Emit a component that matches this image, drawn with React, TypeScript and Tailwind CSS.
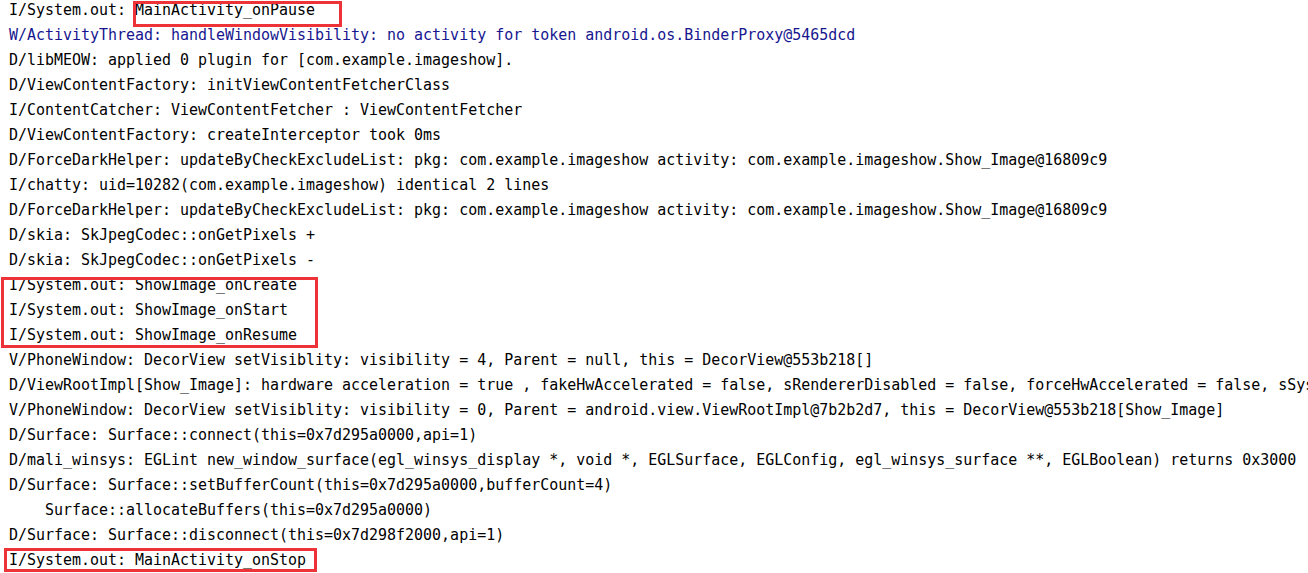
const lines: { text: string; blue?: boolean }[] = [
  { text: "I/System.out: MainActivity_onPause" },
  { text: "W/ActivityThread: handleWindowVisibility: no activity for token android.os.BinderProxy@5465dcd", blue: true },
  { text: "D/libMEOW: applied 0 plugin for [com.example.imageshow]." },
  { text: "D/ViewContentFactory: initViewContentFetcherClass" },
  { text: "I/ContentCatcher: ViewContentFetcher : ViewContentFetcher" },
  { text: "D/ViewContentFactory: createInterceptor took 0ms" },
  { text: "D/ForceDarkHelper: updateByCheckExcludeList: pkg: com.example.imageshow activity: com.example.imageshow.Show_Image@16809c9" },
  { text: "I/chatty: uid=10282(com.example.imageshow) identical 2 lines" },
  { text: "D/ForceDarkHelper: updateByCheckExcludeList: pkg: com.example.imageshow activity: com.example.imageshow.Show_Image@16809c9" },
  { text: "D/skia: SkJpegCodec::onGetPixels +" },
  { text: "D/skia: SkJpegCodec::onGetPixels -" },
  { text: "I/System.out: ShowImage_onCreate" },
  { text: "I/System.out: ShowImage_onStart" },
  { text: "I/System.out: ShowImage_onResume" },
  { text: "V/PhoneWindow: DecorView setVisiblity: visibility = 4, Parent = null, this = DecorView@553b218[]" },
  { text: "D/ViewRootImpl[Show_Image]: hardware acceleration = true , fakeHwAccelerated = false, sRendererDisabled = false, forceHwAccelerated = false, sSystemRendererDisabled = false" },
  { text: "V/PhoneWindow: DecorView setVisiblity: visibility = 0, Parent = android.view.ViewRootImpl@7b2b2d7, this = DecorView@553b218[Show_Image]" },
  { text: "D/Surface: Surface::connect(this=0x7d295a0000,api=1)" },
  { text: "D/mali_winsys: EGLint new_window_surface(egl_winsys_display *, void *, EGLSurface, EGLConfig, egl_winsys_surface **, EGLBoolean) returns 0x3000" },
  { text: "D/Surface: Surface::setBufferCount(this=0x7d295a0000,bufferCount=4)" },
  { text: "    Surface::allocateBuffers(this=0x7d295a0000)" },
  { text: "D/Surface: Surface::disconnect(this=0x7d298f2000,api=1)" },
  { text: "I/System.out: MainActivity_onStop" },
];

export default function App() {
  return (
    <div className="relative h-[573px] w-[1308px] overflow-hidden bg-white">
      <div className="-mt-[2px] pl-[9px] font-['DejaVu_Sans_Mono',monospace] text-[14.96px] leading-[25px] text-black">
        {lines.map((l, i) => (
          <div key={i} className={l.blue ? "whitespace-pre text-[#16168f]" : "whitespace-pre"}>
            {l.text}
          </div>
        ))}
      </div>

      {/* annotation boxes */}
      <div className="absolute left-[133px] top-[1px] h-[26px] w-[209px] border-[3px] border-[#ee3338]" />
      <div className="absolute left-[1px] top-[277px] h-[71px] w-[317px] border-[3px] border-[#ee3338]" />
      <div className="absolute left-[4px] top-[548px] h-[24px] w-[313px] border-[3px] border-[#ee3338]" />
    </div>
  );
}
